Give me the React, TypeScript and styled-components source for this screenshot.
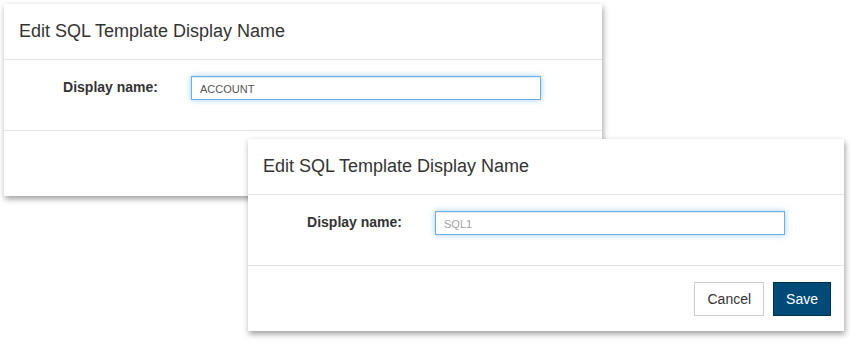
import React from 'react'
import styled, { createGlobalStyle } from 'styled-components'

const GlobalStyle = createGlobalStyle`
  html, body {
    margin: 0;
    padding: 0;
    background: #ffffff;
  }
  body {
    font-family: "Liberation Sans", Arial, sans-serif;
    color: #333333;
  }
`

const Desktop = styled.div`
  position: relative;
  width: 850px;
  height: 344px;
  overflow: hidden;
  background: #ffffff;
`

const Dialog = styled.div<{ $left: number; $top: number; $width: number }>`
  position: absolute;
  left: ${p => p.$left}px;
  top: ${p => p.$top}px;
  width: ${p => p.$width}px;
  background: #ffffff;
  box-shadow: 1px 3px 6px rgba(0, 0, 0, 0.38);
  display: flex;
  flex-direction: column;
`

const Header = styled.div`
  height: 56px;
  box-sizing: border-box;
  display: flex;
  align-items: center;
  padding: 0 15px;
  border-bottom: 1px solid #e5e5e5;
  font-size: 18px;
  color: #333333;
`

const Body = styled.div`
  height: 71px;
  box-sizing: border-box;
  padding-top: 16px;
  border-bottom: 1px solid #e5e5e5;
`

const FieldRow = styled.div`
  display: grid;
  grid-template-columns: 154px 350px;
  column-gap: 33px;
  align-items: center;
`

const Label = styled.label`
  text-align: right;
  font-weight: bold;
  font-size: 14px;
  color: #333333;
  padding-bottom: 3px;
`

const Input = styled.input`
  box-sizing: border-box;
  width: 350px;
  height: 24px;
  padding: 1px 8px 0;
  border: 1px solid #66afe9;
  outline: none;
  font-family: "Liberation Sans", Arial, sans-serif;
  font-size: 11px;
  color: #555555;
  box-shadow: inset 0 1px 1px rgba(0, 0, 0, 0.075), 0 0 6px rgba(102, 175, 233, 0.6);
  &::placeholder {
    color: #a0a0a0;
  }
`

const Footer = styled.div`
  height: 65px;
  box-sizing: border-box;
  display: flex;
  justify-content: flex-end;
  align-items: flex-start;
  gap: 9px;
  padding: 16px 13px 0 0;
`

const Button = styled.button<{ $primary?: boolean }>`
  height: 34px;
  padding: 0 12px;
  font-family: "Liberation Sans", Arial, sans-serif;
  font-size: 14px;
  border: 1px solid ${p => (p.$primary ? '#002f4f' : '#cccccc')};
  background: ${p => (p.$primary ? '#004a78' : '#ffffff')};
  color: ${p => (p.$primary ? '#ffffff' : '#333333')};
  border-radius: 0;
  cursor: pointer;
`

interface EditDialogProps {
  left: number
  top: number
  width: number
  value?: string
  placeholder?: string
}

const EditDialog: React.FC<EditDialogProps> = ({ left, top, width, value, placeholder }) => (
  <Dialog $left={left} $top={top} $width={width}>
    <Header>Edit SQL Template Display Name</Header>
    <Body>
      <FieldRow>
        <Label>Display name:</Label>
        <Input defaultValue={value} placeholder={placeholder} />
      </FieldRow>
    </Body>
    <Footer>
      <Button>Cancel</Button>
      <Button $primary>Save</Button>
    </Footer>
  </Dialog>
)

const App: React.FC = () => (
  <>
    <GlobalStyle />
    <Desktop>
      <EditDialog left={4} top={4} width={598} value="ACCOUNT" />
      <EditDialog left={248} top={139} width={596} placeholder="SQL1" />
    </Desktop>
  </>
)

export default App
